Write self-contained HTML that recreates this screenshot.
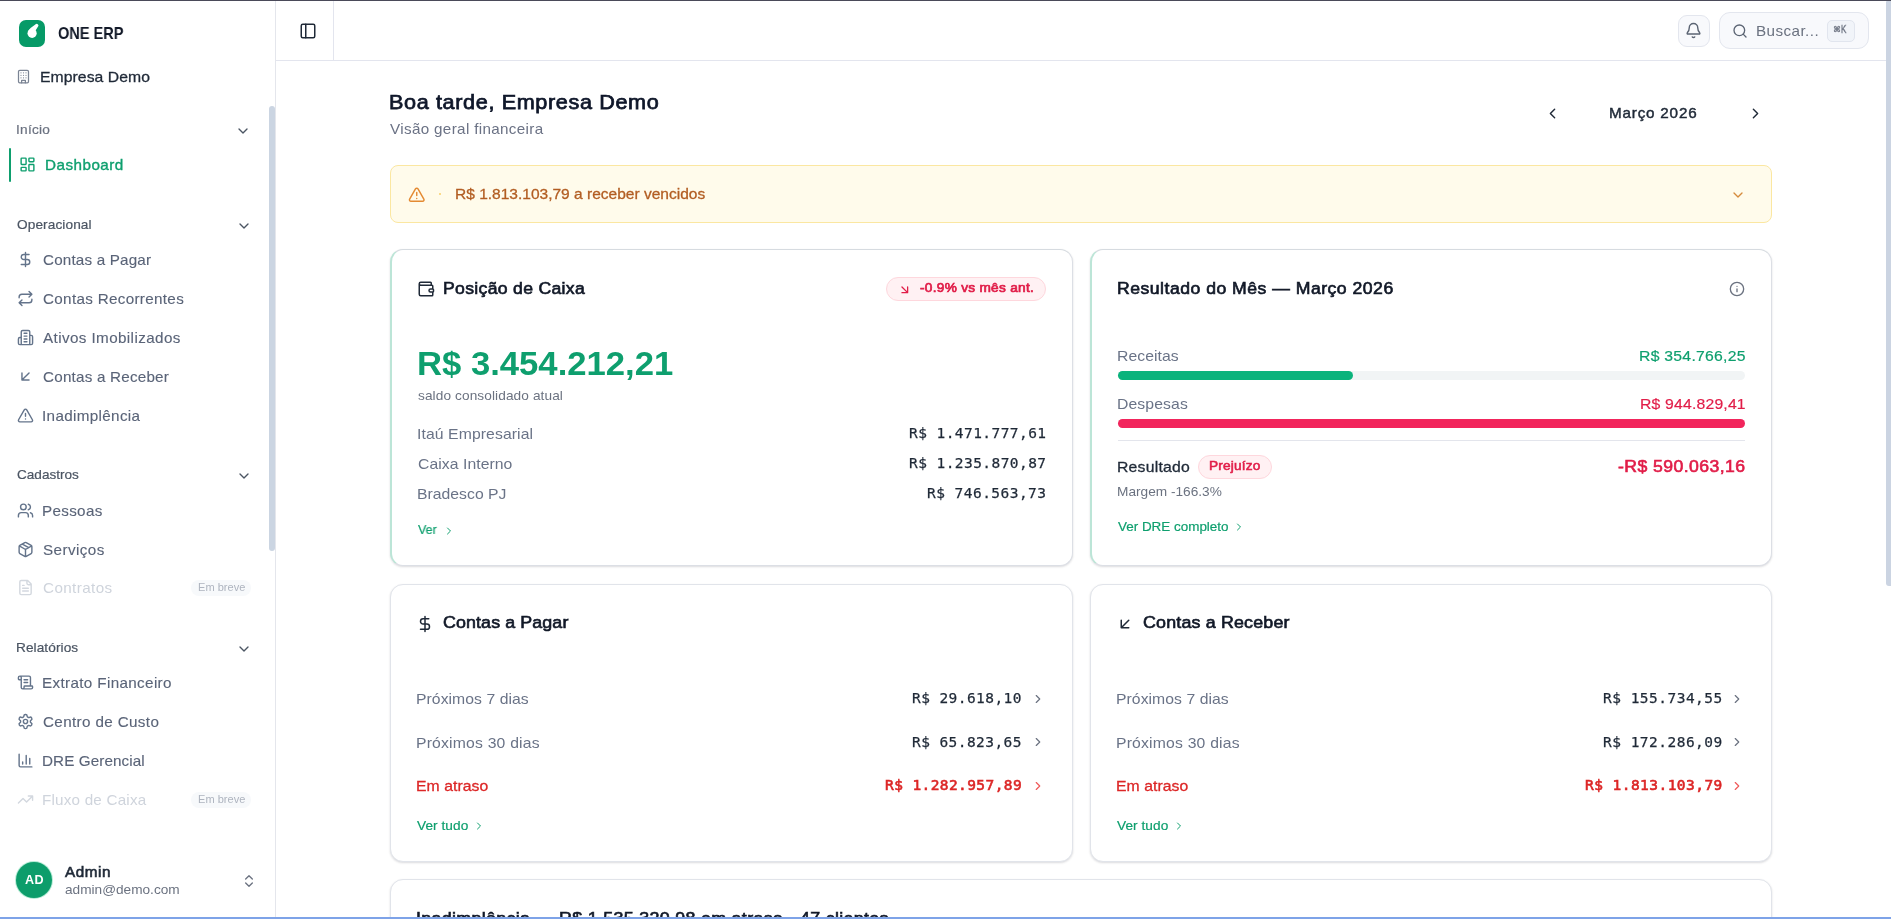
<!DOCTYPE html>
<html lang="pt-BR">
<head>
<meta charset="utf-8">
<title>ONE ERP — Dashboard</title>
<style>
*{box-sizing:border-box;margin:0;padding:0}
html,body{width:1891px;height:919px;overflow:hidden;background:#fff}
body{position:relative;font-family:"Liberation Sans",Arial,sans-serif;color:#111827;-webkit-font-smoothing:antialiased}
.abs,.t,svg.i{position:absolute}
.t{will-change:transform;white-space:pre;display:block;transform-origin:0 0}
svg.i{fill:none;stroke:currentColor;stroke-width:2;stroke-linecap:round;stroke-linejoin:round;overflow:visible}
.winline{position:absolute;left:0;top:0;width:1891px;height:1px;background:#4a4a59;z-index:9}
.winbottom{position:absolute;left:0;top:917px;width:1891px;height:2px;background:#7ea3e8;z-index:9}
.pagescroll{position:absolute;left:1886px;top:1px;width:6px;height:585px;background:#cbd4e2;border-radius:1px 0 0 3px;z-index:8}
/* sidebar */
aside{position:absolute;left:0;top:0;width:276px;height:919px;background:#fff;border-right:1px solid #e4e6ec}
.sidescroll{position:absolute;left:269px;top:105.5px;width:6px;height:445.5px;background:#cbd5e2;border-radius:3px}
.logo{position:absolute;left:18.5px;top:20px;width:26.5px;height:26.5px;border-radius:7px;background:#069a67}
.activebar{position:absolute;left:8.5px;top:148px;width:2px;height:34px;background:#0e9f6e;border-radius:1px}
.soon{position:absolute;left:191.4px;width:60px;height:16.4px;border-radius:9px;background:#f7f9fb}
.avatar{position:absolute;left:16.2px;top:862.2px;width:36px;height:36px;border-radius:50%;background:#0d9d6b;box-shadow:0 0 0 1px #b6ecd6}
/* topbar */
.topbar{position:absolute;left:276px;top:0;width:1610px;height:61px;background:#fff;border-bottom:1px solid #e3e5ee}
.vdiv{position:absolute;left:333px;top:1px;width:1px;height:59px;background:#e3e5ee}
.bellbtn{position:absolute;left:1678px;top:15px;width:32px;height:32px;border-radius:9px;border:1px solid #e3e6ee;background:#f8f9fc}
.search{position:absolute;left:1718.5px;top:12.3px;width:150.5px;height:36.5px;border-radius:11px;border:1px solid #e3e6ee;background:#f8f9fc}
.kbd{position:absolute;left:1827px;top:20.2px;width:27.5px;height:21.6px;border-radius:5px;border:1px solid #e1e5ee;background:#f1f4f9}
/* main */
.alert{position:absolute;left:389.8px;top:164.8px;width:1381.8px;height:57.8px;border-radius:8px;border:1px solid #fbe7a1;background:#fffbeb}
.card{position:absolute;background:#fff;border:1px solid #e1e4ea;border-radius:13px;box-shadow:0 1px 2px rgba(15,23,42,.10),0 1px 3px rgba(15,23,42,.05)}
.card.hl{border-left:2px solid #bce5d7;border-top-color:#d6dbe0;border-right-color:#dcdfe5;border-bottom-color:#dcdfe5}
.pill{position:absolute;border-radius:999px;border:1px solid #fed7dd;background:#fff1f3}
.track{position:absolute;height:8.5px;border-radius:5px;background:#f1f4f5}
.fill{position:absolute;left:0;top:0;height:100%;border-radius:5px}
.hr{position:absolute;height:1px;background:#e3e5ec}
</style>
</head>
<body>
<div class="winline"></div>

<aside>
  <div class="logo"><svg class="i" style="left:0;top:0" width="26.5" height="26.5" viewBox="0 0 26.5 26.5"><circle cx="13.1" cy="13.3" r="4.6" fill="#fff" stroke="none"/><path d="M16.7 4.3Q11.6 7.4 9 11.2L13.1 13.3 18 5.2Z" fill="#fff" stroke="none"/><path d="M13.8 12 17.9 5.5" stroke="#fff" stroke-width="3.1"/></svg></div>
  <!-- building -->
  <svg class="i" style="left:16.3px;top:69.1px;color:#7b8494" width="15" height="15" viewBox="0 0 24 24"><rect width="16" height="20" x="4" y="2" rx="2"/><path d="M9 22v-4h6v4M8 6h.01M16 6h.01M12 6h.01M12 10h.01M12 14h.01M16 10h.01M16 14h.01M8 10h.01M8 14h.01"/></svg>
  <!-- group chevrons -->
  <svg class="i" style="left:235px;top:122.9px;color:#4b5563" width="16" height="16" viewBox="0 0 24 24"><path d="m6 9 6 6 6-6"/></svg>
  <svg class="i" style="left:235.5px;top:217.8px;color:#4b5563" width="16" height="16" viewBox="0 0 24 24"><path d="m6 9 6 6 6-6"/></svg>
  <svg class="i" style="left:235.5px;top:467.7px;color:#4b5563" width="16" height="16" viewBox="0 0 24 24"><path d="m6 9 6 6 6-6"/></svg>
  <svg class="i" style="left:235.5px;top:640.5px;color:#4b5563" width="16" height="16" viewBox="0 0 24 24"><path d="m6 9 6 6 6-6"/></svg>
  <div class="activebar"></div>
  <!-- dashboard -->
  <svg class="i" style="left:18.7px;top:156.3px;color:#0e9f6e" width="17" height="17" viewBox="0 0 24 24"><rect width="7" height="9" x="3" y="3" rx="1"/><rect width="7" height="5" x="14" y="3" rx="1"/><rect width="7" height="9" x="14" y="12" rx="1"/><rect width="7" height="5" x="3" y="16" rx="1"/></svg>
  <!-- dollar -->
  <svg class="i" style="left:16.5px;top:251.1px;color:#64748b" width="17" height="17" viewBox="0 0 24 24"><path d="M12 2v20M17 5H9.5a3.5 3.5 0 0 0 0 7h5a3.5 3.5 0 0 1 0 7H6"/></svg>
  <!-- repeat -->
  <svg class="i" style="left:16.5px;top:290.2px;color:#64748b" width="17" height="17" viewBox="0 0 24 24"><path d="m17 2 4 4-4 4M3 11v-1a4 4 0 0 1 4-4h14M7 22l-4-4 4-4M21 13v1a4 4 0 0 1-4 4H3"/></svg>
  <!-- building-2 -->
  <svg class="i" style="left:16.5px;top:329.4px;color:#64748b" width="17" height="17" viewBox="0 0 24 24"><path d="M6 22V4a2 2 0 0 1 2-2h8a2 2 0 0 1 2 2v18ZM6 12H4a2 2 0 0 0-2 2v6a2 2 0 0 0 2 2h2M18 9h2a2 2 0 0 1 2 2v9a2 2 0 0 1-2 2h-2M10 6h4M10 10h4M10 14h4M10 18h4"/></svg>
  <!-- arrow-down-left -->
  <svg class="i" style="left:16.5px;top:368.4px;color:#64748b" width="17" height="17" viewBox="0 0 24 24"><path d="M17 7 7 17M17 17H7V7"/></svg>
  <!-- triangle-alert -->
  <svg class="i" style="left:16.5px;top:407.2px;color:#64748b" width="17" height="17" viewBox="0 0 24 24"><path d="m21.73 18-8-14a2 2 0 0 0-3.48 0l-8 14A2 2 0 0 0 4 21h16a2 2 0 0 0 1.73-3M12 9v4M12 17h.01"/></svg>
  <!-- users -->
  <svg class="i" style="left:16.5px;top:502.2px;color:#64748b" width="17" height="17" viewBox="0 0 24 24"><path d="M16 21v-2a4 4 0 0 0-4-4H6a4 4 0 0 0-4 4v2"/><circle cx="9" cy="7" r="4"/><path d="M22 21v-2a4 4 0 0 0-3-3.87M16 3.13a4 4 0 0 1 0 7.75"/></svg>
  <!-- box -->
  <svg class="i" style="left:16.5px;top:541.3px;color:#64748b" width="17" height="17" viewBox="0 0 24 24"><path d="m7.5 4.27 9 5.15M21 8a2 2 0 0 0-1-1.73l-7-4a2 2 0 0 0-2 0l-7 4A2 2 0 0 0 3 8v8a2 2 0 0 0 1 1.73l7 4a2 2 0 0 0 2 0l7-4A2 2 0 0 0 21 16ZM3.3 7l8.7 5 8.7-5M12 22V12"/></svg>
  <!-- file-text -->
  <svg class="i" style="left:16.5px;top:579.4px;color:#d3d8df" width="17" height="17" viewBox="0 0 24 24"><path d="M15 2H6a2 2 0 0 0-2 2v16a2 2 0 0 0 2 2h12a2 2 0 0 0 2-2V7ZM14 2v4a2 2 0 0 0 2 2h4M10 9H8M16 13H8M16 17H8"/></svg>
  <div class="soon" style="top:579.8px"></div>
  <!-- scroll-text -->
  <svg class="i" style="left:16.5px;top:674.4px;color:#64748b" width="17" height="17" viewBox="0 0 24 24"><path d="M15 12h-5M15 8h-5M19 17V5a2 2 0 0 0-2-2H4M8 21h12a2 2 0 0 0 2-2v-1a1 1 0 0 0-1-1H11a1 1 0 0 0-1 1v1a2 2 0 1 1-4 0V5a2 2 0 1 0-4 0v2a1 1 0 0 0 1 1h3"/></svg>
  <!-- settings -->
  <svg class="i" style="left:16.5px;top:713.4px;color:#64748b" width="17" height="17" viewBox="0 0 24 24"><path d="M12.22 2h-.44a2 2 0 0 0-2 2v.18a2 2 0 0 1-1 1.73l-.43.25a2 2 0 0 1-2 0l-.15-.08a2 2 0 0 0-2.73.73l-.22.38a2 2 0 0 0 .73 2.73l.15.1a2 2 0 0 1 1 1.72v.51a2 2 0 0 1-1 1.74l-.15.09a2 2 0 0 0-.73 2.73l.22.38a2 2 0 0 0 2.73.73l.15-.08a2 2 0 0 1 2 0l.43.25a2 2 0 0 1 1 1.73V20a2 2 0 0 0 2 2h.44a2 2 0 0 0 2-2v-.18a2 2 0 0 1 1-1.73l.43-.25a2 2 0 0 1 2 0l.15.08a2 2 0 0 0 2.73-.73l.22-.39a2 2 0 0 0-.73-2.73l-.15-.08a2 2 0 0 1-1-1.74v-.5a2 2 0 0 1 1-1.74l.15-.09a2 2 0 0 0 .73-2.73l-.22-.38a2 2 0 0 0-2.73-.73l-.15.08a2 2 0 0 1-2 0l-.43-.25a2 2 0 0 1-1-1.73V4a2 2 0 0 0-2-2z"/><circle cx="12" cy="12" r="3"/></svg>
  <!-- bar-chart -->
  <svg class="i" style="left:16.5px;top:752.2px;color:#64748b" width="17" height="17" viewBox="0 0 24 24"><path d="M3 3v16a2 2 0 0 0 2 2h16M18 17V9M13 17V5M8 17v-3"/></svg>
  <!-- trending-up -->
  <svg class="i" style="left:17.0px;top:791.1px;color:#d3d8df" width="17" height="17" viewBox="0 0 24 24"><path d="M22 7 13.5 15.5 8.5 10.5 2 17M16 7h6v6"/></svg>
  <div class="soon" style="top:791.8px"></div>
  <div class="avatar"></div>
  <!-- chevrons-up-down -->
  <svg class="i" style="left:241.4px;top:872.8px;color:#6b7280" width="16" height="16" viewBox="0 0 24 24"><path d="m7 15 5 5 5-5M7 9l5-5 5 5"/></svg>
  <div class="sidescroll"></div>
<span class="t x-side" style="left:58.40px;top:23.90px;font:700 16.2px/18px 'Liberation Sans', Arial, sans-serif;color:#111827;transform:scaleX(0.8992)">ONE ERP</span>
<span class="t x-side" style="left:39.95px;top:68.20px;font:400 15px/17px 'Liberation Sans', Arial, sans-serif;color:#1f2937;letter-spacing:0.052px;transform:scaleX(1.0500);-webkit-text-stroke:0.3px #1f2937">Empresa Demo</span>
<span class="t x-side" style="left:16.05px;top:122.10px;font:400 13px/15px 'Liberation Sans', Arial, sans-serif;color:#6b7280;letter-spacing:0.241px;transform:scaleX(1.0500);-webkit-text-stroke:0.2px #6b7280">Início</span>
<span class="t x-side" style="left:45.05px;top:156.80px;font:400 14.5px/16px 'Liberation Sans', Arial, sans-serif;color:#0e9f6e;letter-spacing:0.457px;transform:scaleX(1.0500);-webkit-text-stroke:0.35px #0e9f6e">Dashboard</span>
<span class="t x-side" style="left:17.20px;top:217.10px;font:400 13px/15px 'Liberation Sans', Arial, sans-serif;color:#4b5563;letter-spacing:0.093px;transform:scaleX(1.0500);-webkit-text-stroke:0.2px #4b5563">Operacional</span>
<span class="t x-side" style="left:43.40px;top:251.90px;font:400 14.5px/16px 'Liberation Sans', Arial, sans-serif;color:#5a6478;letter-spacing:0.163px;transform:scaleX(1.0500);-webkit-text-stroke:0.12px #5a6478">Contas a Pagar</span>
<span class="t x-side" style="left:43.40px;top:290.90px;font:400 14.5px/16px 'Liberation Sans', Arial, sans-serif;color:#5a6478;letter-spacing:0.301px;transform:scaleX(1.0500);-webkit-text-stroke:0.12px #5a6478">Contas Recorrentes</span>
<span class="t x-side" style="left:43.40px;top:330.20px;font:400 14.5px/16px 'Liberation Sans', Arial, sans-serif;color:#5a6478;letter-spacing:0.373px;transform:scaleX(1.0500);-webkit-text-stroke:0.12px #5a6478">Ativos Imobilizados</span>
<span class="t x-side" style="left:43.40px;top:369.20px;font:400 14.5px/16px 'Liberation Sans', Arial, sans-serif;color:#5a6478;letter-spacing:0.197px;transform:scaleX(1.0500);-webkit-text-stroke:0.12px #5a6478">Contas a Receber</span>
<span class="t x-side" style="left:42.35px;top:408.00px;font:400 14.5px/16px 'Liberation Sans', Arial, sans-serif;color:#5a6478;letter-spacing:0.327px;transform:scaleX(1.0500);-webkit-text-stroke:0.12px #5a6478">Inadimplência</span>
<span class="t x-side" style="left:17.20px;top:467.00px;font:400 13px/15px 'Liberation Sans', Arial, sans-serif;color:#4b5563;transform:scaleX(1.0444);-webkit-text-stroke:0.2px #4b5563">Cadastros</span>
<span class="t x-side" style="left:42.35px;top:503.00px;font:400 14.5px/16px 'Liberation Sans', Arial, sans-serif;color:#5a6478;letter-spacing:0.304px;transform:scaleX(1.0500);-webkit-text-stroke:0.12px #5a6478">Pessoas</span>
<span class="t x-side" style="left:43.40px;top:542.10px;font:400 14.5px/16px 'Liberation Sans', Arial, sans-serif;color:#5a6478;letter-spacing:0.406px;transform:scaleX(1.0500);-webkit-text-stroke:0.12px #5a6478">Serviços</span>
<span class="t x-side" style="left:43.40px;top:580.20px;font:400 14.5px/16px 'Liberation Sans', Arial, sans-serif;color:#cfd4dc;letter-spacing:0.376px;transform:scaleX(1.0500)">Contratos</span>
<span class="t x-side" style="left:197.80px;top:581.00px;font:400 10.5px/12px 'Liberation Sans', Arial, sans-serif;color:#aeb4bf;letter-spacing:0.034px;transform:scaleX(1.0500)">Em breve</span>
<span class="t x-side" style="left:16.15px;top:640.20px;font:400 13px/15px 'Liberation Sans', Arial, sans-serif;color:#4b5563;letter-spacing:0.071px;transform:scaleX(1.0500);-webkit-text-stroke:0.2px #4b5563">Relatórios</span>
<span class="t x-side" style="left:42.35px;top:675.20px;font:400 14.5px/16px 'Liberation Sans', Arial, sans-serif;color:#5a6478;letter-spacing:0.334px;transform:scaleX(1.0500);-webkit-text-stroke:0.12px #5a6478">Extrato Financeiro</span>
<span class="t x-side" style="left:43.40px;top:714.20px;font:400 14.5px/16px 'Liberation Sans', Arial, sans-serif;color:#5a6478;letter-spacing:0.340px;transform:scaleX(1.0500);-webkit-text-stroke:0.12px #5a6478">Centro de Custo</span>
<span class="t x-side" style="left:42.35px;top:753.00px;font:400 14.5px/16px 'Liberation Sans', Arial, sans-serif;color:#5a6478;letter-spacing:0.091px;transform:scaleX(1.0500);-webkit-text-stroke:0.12px #5a6478">DRE Gerencial</span>
<span class="t x-side" style="left:42.35px;top:791.80px;font:400 14.5px/16px 'Liberation Sans', Arial, sans-serif;color:#cfd4dc;letter-spacing:0.192px;transform:scaleX(1.0500)">Fluxo de Caixa</span>
<span class="t x-side" style="left:197.80px;top:793.00px;font:400 10.5px/12px 'Liberation Sans', Arial, sans-serif;color:#aeb4bf;letter-spacing:0.034px;transform:scaleX(1.0500)">Em breve</span>
<span class="t x-side" style="left:25.00px;top:873.00px;font:700 12px/14px 'Liberation Sans', Arial, sans-serif;color:#ffffff;letter-spacing:0.334px;transform:scaleX(1.0500)">AD</span>
<span class="t x-side" style="left:64.70px;top:863.80px;font:400 14.5px/16px 'Liberation Sans', Arial, sans-serif;color:#1f2937;letter-spacing:0.551px;transform:scaleX(1.0500);-webkit-text-stroke:0.6px #1f2937">Admin</span>
<span class="t x-side" style="left:64.70px;top:882.20px;font:400 13px/15px 'Liberation Sans', Arial, sans-serif;color:#6b7280;transform:scaleX(1.0492)">admin@demo.com</span>
</aside>

<header>
  <div class="topbar"></div>
  <!-- panel-left -->
  <svg class="i" style="left:299.4px;top:22px;color:#1f2937" width="18" height="18" viewBox="0 0 24 24"><rect width="18" height="18" x="3" y="3" rx="2"/><path d="M9 3v18"/></svg>
  <div class="vdiv"></div>
  <div class="bellbtn"></div>
  <svg class="i" style="left:1685px;top:21.9px;color:#5b6473" width="17" height="17" viewBox="0 0 24 24"><path d="M10.268 21a2 2 0 0 0 3.464 0M3.262 15.326A1 1 0 0 0 4 17h16a1 1 0 0 0 .74-1.673C19.41 13.956 18 12.499 18 8A6 6 0 0 0 6 8c0 4.499-1.411 5.956-2.738 7.326"/></svg>
  <div class="search"></div>
  <svg class="i" style="left:1732.3px;top:22.6px;color:#5b6473" width="16" height="16" viewBox="0 0 24 24"><circle cx="11" cy="11" r="8"/><path d="m21 21-4.3-4.3"/></svg>
  <div class="kbd"></div>
<span class="t x-top" style="left:1755.75px;top:23.00px;font:400 14.5px/16px 'Liberation Sans', Arial, sans-serif;color:#6b7280;letter-spacing:0.404px;transform:scaleX(1.0500)">Buscar...</span>
<span class="t x-top" style="left:1832.90px;top:25.30px;font:400 8px/9px 'DejaVu Sans', 'Liberation Sans', sans-serif;color:#6b7280;-webkit-text-stroke:0.3px #6b7280">⌘</span>
<span class="t x-top" style="left:1841.10px;top:24.00px;font:400 10.3px/11px 'Liberation Sans', Arial, sans-serif;color:#6b7280;transform:scaleX(0.7714);-webkit-text-stroke:0.4px #6b7280">K</span>
</header>

<main>
  <div class="pagehead">
<span class="t x-head" style="left:389.25px;top:90.00px;font:400 20.6px/23px 'Liberation Sans', Arial, sans-serif;color:#0f172a;letter-spacing:0.594px;transform:scaleX(1.0500);-webkit-text-stroke:0.75px #0f172a">Boa tarde, Empresa Demo</span>
<span class="t x-head" style="left:390.30px;top:121.00px;font:400 14.5px/16px 'Liberation Sans', Arial, sans-serif;color:#6b7285;letter-spacing:0.321px;transform:scaleX(1.0500)">Visão geral financeira</span>
<span class="t x-head" style="left:1609.15px;top:105.00px;font:400 14.5px/16px 'Liberation Sans', Arial, sans-serif;color:#1f2937;letter-spacing:0.764px;transform:scaleX(1.0500);-webkit-text-stroke:0.45px #1f2937">Março 2026</span>
    <svg class="i" style="left:1543.8px;top:105.2px;color:#1f2937" width="17" height="17" viewBox="0 0 24 24"><path d="m15 18-6-6 6-6"/></svg>
    <svg class="i" style="left:1747px;top:105.2px;color:#1f2937" width="17" height="17" viewBox="0 0 24 24"><path d="m9 18 6-6-6-6"/></svg>
  </div>

  <section aria-label="Alertas">
    <div class="alert"></div>
    <svg class="i" style="left:407.6px;top:185.9px;color:#e48a32" width="17.5" height="17.5" viewBox="0 0 24 24"><path d="m21.73 18-8-14a2 2 0 0 0-3.48 0l-8 14A2 2 0 0 0 4 21h16a2 2 0 0 0 1.73-3M12 9v4M12 17h.01"/></svg>
    <div class="abs" style="left:439.2px;top:193px;width:2px;height:2px;border-radius:50%;background:#f8cf6a"></div>
    <svg class="i" style="left:1730.3px;top:186.9px;color:#d58a3c" width="16" height="16" viewBox="0 0 24 24"><path d="m6 9 6 6 6-6"/></svg>
<span class="t x-alert" style="left:454.77px;top:185.20px;font:400 15px/17px 'Liberation Sans', Arial, sans-serif;color:#b25d22;transform:scaleX(1.0344);-webkit-text-stroke:0.3px #b25d22">R$ 1.813.103,79 a receber vencidos</span>
  </section>

  <!-- card 1: Posição de Caixa -->
  <section>
    <div class="card hl" style="left:389.5px;top:249.3px;width:683.3px;height:316.7px"></div>
    <svg class="i" style="left:417.2px;top:279.9px;color:#1f2937" width="18" height="18" viewBox="0 0 24 24"><path d="M19 7V4a1 1 0 0 0-1-1H5a2 2 0 0 0 0 4h15a1 1 0 0 1 1 1v4h-3a2 2 0 0 0 0 4h3a1 1 0 0 0 1-1v-2a1 1 0 0 0-1-1M3 5v14a2 2 0 0 0 2 2h15a1 1 0 0 0 1-1v-4"/></svg>
    <div class="pill" style="left:885.5px;top:277px;width:160.5px;height:24.2px"></div>
    <svg class="i" style="left:897.6px;top:282.7px;color:#e11d48;stroke-width:2.3" width="13.6" height="13.6" viewBox="0 0 24 24"><path d="m7 7 10 10M17 7v10H7"/></svg>
    <svg class="i" style="left:443.2px;top:524.6px;color:#0e9f6e" width="12" height="12" viewBox="0 0 24 24"><path d="m9 18 6-6-6-6"/></svg>
<span class="t x-c1" style="left:443.15px;top:279.30px;font:400 16.8px/19px 'Liberation Sans', Arial, sans-serif;color:#111827;letter-spacing:0.294px;transform:scaleX(1.0500);-webkit-text-stroke:0.65px #111827">Posição de Caixa</span>
<span class="t x-c1" style="left:919.70px;top:280.00px;font:400 13px/15px 'Liberation Sans', Arial, sans-serif;color:#e11d48;letter-spacing:0.268px;transform:scaleX(1.0500);-webkit-text-stroke:0.7px #e11d48">-0.9% vs mês ant.</span>
<span class="t x-c1" style="left:417.12px;top:345.20px;font:700 33.3px/37px 'Liberation Sans', Arial, sans-serif;color:#0e9f6e;transform:scaleX(1.0406)">R$ 3.454.212,21</span>
<span class="t x-c1" style="left:418.20px;top:388.00px;font:400 13px/15px 'Liberation Sans', Arial, sans-serif;color:#6b7280;letter-spacing:0.096px;transform:scaleX(1.0500)">saldo consolidado atual</span>
<span class="t x-c1" style="left:416.95px;top:425.10px;font:400 15px/17px 'Liberation Sans', Arial, sans-serif;color:#6a7387;letter-spacing:0.084px;transform:scaleX(1.0500)">Itaú Empresarial</span>
<span class="t x-c1" style="left:418.00px;top:455.10px;font:400 15px/17px 'Liberation Sans', Arial, sans-serif;color:#6a7387;letter-spacing:0.054px;transform:scaleX(1.0500)">Caixa Interno</span>
<span class="t x-c1" style="left:416.95px;top:485.00px;font:400 15px/17px 'Liberation Sans', Arial, sans-serif;color:#6a7387;letter-spacing:0.017px;transform:scaleX(1.0500)">Bradesco PJ</span>
<span class="t x-c1" style="left:908.70px;top:425.40px;font:400 14.5px/16px 'DejaVu Sans Mono', 'Liberation Mono', monospace;color:#1f2937;letter-spacing:0.435px;-webkit-text-stroke:0.25px #1f2937">R$ 1.471.777,61</span>
<span class="t x-c1" style="left:908.70px;top:455.40px;font:400 14.5px/16px 'DejaVu Sans Mono', 'Liberation Mono', monospace;color:#1f2937;letter-spacing:0.435px;-webkit-text-stroke:0.25px #1f2937">R$ 1.235.870,87</span>
<span class="t x-c1" style="left:926.70px;top:485.40px;font:400 14.5px/16px 'DejaVu Sans Mono', 'Liberation Mono', monospace;color:#1f2937;letter-spacing:0.462px;-webkit-text-stroke:0.25px #1f2937">R$ 746.563,73</span>
<span class="t x-c1" style="left:418.00px;top:521.90px;font:400 13px/15px 'Liberation Sans', Arial, sans-serif;color:#0e9f6e;transform:scaleX(0.9562);-webkit-text-stroke:0.2px #0e9f6e">Ver</span>
  </section>

  <!-- card 2: Resultado do Mês -->
  <section>
    <div class="card hl" style="left:1089.5px;top:249.3px;width:682.5px;height:316.7px"></div>
    <svg class="i" style="left:1729px;top:281px;color:#6b7280" width="16" height="16" viewBox="0 0 24 24"><circle cx="12" cy="12" r="10"/><path d="M12 16v-4M12 8h.01"/></svg>
    <div class="track" style="left:1118px;top:371.3px;width:627.2px"><div class="fill" style="width:234.7px;background:#0bb37c"></div></div>
    <div class="track" style="left:1118px;top:419px;width:627.2px"><div class="fill" style="width:627.2px;background:#f2255c"></div></div>
    <div class="hr" style="left:1118px;top:440.2px;width:627.2px"></div>
    <div class="pill" style="left:1197.8px;top:455px;width:74.2px;height:24px"></div>
    <svg class="i" style="left:1233.3px;top:521.2px;color:#0e9f6e" width="12" height="12" viewBox="0 0 24 24"><path d="m9 18 6-6-6-6"/></svg>
<span class="t x-c2" style="left:1116.95px;top:279.40px;font:400 16.8px/19px 'Liberation Sans', Arial, sans-serif;color:#111827;letter-spacing:0.467px;transform:scaleX(1.0500);-webkit-text-stroke:0.65px #111827">Resultado do Mês — Março 2026</span>
<span class="t x-c2" style="left:1116.95px;top:347.40px;font:400 15px/17px 'Liberation Sans', Arial, sans-serif;color:#6a7387;letter-spacing:0.040px;transform:scaleX(1.0500)">Receitas</span>
<span class="t x-c2" style="left:1638.75px;top:347.20px;font:400 15px/17px 'Liberation Sans', Arial, sans-serif;color:#0e9f6e;letter-spacing:0.252px;transform:scaleX(1.0500);-webkit-text-stroke:0.2px #0e9f6e">R$ 354.766,25</span>
<span class="t x-c2" style="left:1116.95px;top:395.40px;font:400 15px/17px 'Liberation Sans', Arial, sans-serif;color:#6a7387;letter-spacing:0.100px;transform:scaleX(1.0500)">Despesas</span>
<span class="t x-c2" style="left:1639.75px;top:395.40px;font:400 15px/17px 'Liberation Sans', Arial, sans-serif;color:#e11d48;letter-spacing:0.180px;transform:scaleX(1.0500);-webkit-text-stroke:0.2px #e11d48">R$ 944.829,41</span>
<span class="t x-c2" style="left:1116.65px;top:458.10px;font:400 15px/17px 'Liberation Sans', Arial, sans-serif;color:#1f2937;letter-spacing:0.213px;transform:scaleX(1.0500);-webkit-text-stroke:0.3px #1f2937">Resultado</span>
<span class="t x-c2" style="left:1208.85px;top:458.20px;font:400 13px/15px 'Liberation Sans', Arial, sans-serif;color:#e11d48;letter-spacing:0.179px;transform:scaleX(1.0500);-webkit-text-stroke:0.55px #e11d48">Prejuízo</span>
<span class="t x-c2" style="left:1116.69px;top:484.30px;font:400 13.5px/15px 'Liberation Sans', Arial, sans-serif;color:#6b7280;transform:scaleX(1.0123)">Margem -166.3%</span>
<span class="t x-c2" style="left:1618.10px;top:456.90px;font:400 16.8px/19px 'Liberation Sans', Arial, sans-serif;color:#e11d48;letter-spacing:0.416px;transform:scaleX(1.0500);-webkit-text-stroke:0.65px #e11d48">-R$ 590.063,16</span>
<span class="t x-c2" style="left:1117.70px;top:519.20px;font:400 13px/15px 'Liberation Sans', Arial, sans-serif;color:#0e9f6e;transform:scaleX(1.0337);-webkit-text-stroke:0.2px #0e9f6e">Ver DRE completo</span>
  </section>

  <!-- card 3: Contas a Pagar -->
  <section>
    <div class="card" style="left:389.5px;top:584.3px;width:683.3px;height:277.3px"></div>
    <svg class="i" style="left:416.2px;top:615.2px;color:#1f2937" width="18" height="18" viewBox="0 0 24 24"><path d="M12 2v20M17 5H9.5a3.5 3.5 0 0 0 0 7h5a3.5 3.5 0 0 1 0 7H6"/></svg>
    <svg class="i" style="left:1030.9px;top:691.7px;color:#6b7280" width="14" height="14" viewBox="0 0 24 24"><path d="m9 18 6-6-6-6"/></svg>
    <svg class="i" style="left:1030.9px;top:735.2px;color:#6b7280" width="14" height="14" viewBox="0 0 24 24"><path d="m9 18 6-6-6-6"/></svg>
    <svg class="i" style="left:1030.9px;top:778.6px;color:#ef5a5a" width="14" height="14" viewBox="0 0 24 24"><path d="m9 18 6-6-6-6"/></svg>
    <svg class="i" style="left:473.2px;top:820.3px;color:#0e9f6e" width="12" height="12" viewBox="0 0 24 24"><path d="m9 18 6-6-6-6"/></svg>
<span class="t x-c3" style="left:442.80px;top:613.20px;font:400 17px/19px 'Liberation Sans', Arial, sans-serif;color:#111827;letter-spacing:0.096px;transform:scaleX(1.0500);-webkit-text-stroke:0.65px #111827">Contas a Pagar</span>
<span class="t x-c3" style="left:416.05px;top:690.00px;font:400 15px/17px 'Liberation Sans', Arial, sans-serif;color:#6a7387;letter-spacing:0.043px;transform:scaleX(1.0500)">Próximos 7 dias</span>
<span class="t x-c3" style="left:416.05px;top:733.50px;font:400 15px/17px 'Liberation Sans', Arial, sans-serif;color:#6a7387;letter-spacing:0.176px;transform:scaleX(1.0500)">Próximos 30 dias</span>
<span class="t x-c3" style="left:415.95px;top:777.10px;font:400 15px/17px 'Liberation Sans', Arial, sans-serif;color:#dc2626;letter-spacing:0.064px;transform:scaleX(1.0500);-webkit-text-stroke:0.3px #dc2626">Em atraso</span>
<span class="t x-c3" style="left:912.30px;top:690.30px;font:400 14.5px/16px 'DejaVu Sans Mono', 'Liberation Mono', monospace;color:#1f2937;letter-spacing:0.425px;-webkit-text-stroke:0.25px #1f2937">R$ 29.618,10</span>
<span class="t x-c3" style="left:912.30px;top:733.80px;font:400 14.5px/16px 'DejaVu Sans Mono', 'Liberation Mono', monospace;color:#1f2937;letter-spacing:0.425px;-webkit-text-stroke:0.25px #1f2937">R$ 65.823,65</span>
<span class="t x-c3" style="left:885.10px;top:777.30px;font:400 14.5px/16px 'DejaVu Sans Mono', 'Liberation Mono', monospace;color:#dc2626;letter-spacing:0.406px;-webkit-text-stroke:0.6px #dc2626">R$ 1.282.957,89</span>
<span class="t x-c3" style="left:417.00px;top:818.00px;font:400 13px/15px 'Liberation Sans', Arial, sans-serif;color:#0e9f6e;letter-spacing:0.054px;transform:scaleX(1.0500);-webkit-text-stroke:0.2px #0e9f6e">Ver tudo</span>
  </section>

  <!-- card 4: Contas a Receber -->
  <section>
    <div class="card" style="left:1089.5px;top:584.3px;width:682.5px;height:277.3px"></div>
    <svg class="i" style="left:1115.9px;top:614.5px;color:#1f2937" width="18" height="18" viewBox="0 0 24 24"><path d="M17 7 7 17M17 17H7V7"/></svg>
    <svg class="i" style="left:1730px;top:691.7px;color:#6b7280" width="14" height="14" viewBox="0 0 24 24"><path d="m9 18 6-6-6-6"/></svg>
    <svg class="i" style="left:1730px;top:735.2px;color:#6b7280" width="14" height="14" viewBox="0 0 24 24"><path d="m9 18 6-6-6-6"/></svg>
    <svg class="i" style="left:1730px;top:778.6px;color:#ef5a5a" width="14" height="14" viewBox="0 0 24 24"><path d="m9 18 6-6-6-6"/></svg>
    <svg class="i" style="left:1172.5px;top:820.3px;color:#0e9f6e" width="12" height="12" viewBox="0 0 24 24"><path d="m9 18 6-6-6-6"/></svg>
<span class="t x-c4" style="left:1142.90px;top:613.20px;font:400 17px/19px 'Liberation Sans', Arial, sans-serif;color:#111827;letter-spacing:0.163px;transform:scaleX(1.0500);-webkit-text-stroke:0.65px #111827">Contas a Receber</span>
<span class="t x-c4" style="left:1115.75px;top:690.00px;font:400 15px/17px 'Liberation Sans', Arial, sans-serif;color:#6a7387;letter-spacing:0.043px;transform:scaleX(1.0500)">Próximos 7 dias</span>
<span class="t x-c4" style="left:1115.75px;top:733.50px;font:400 15px/17px 'Liberation Sans', Arial, sans-serif;color:#6a7387;letter-spacing:0.176px;transform:scaleX(1.0500)">Próximos 30 dias</span>
<span class="t x-c4" style="left:1115.65px;top:777.10px;font:400 15px/17px 'Liberation Sans', Arial, sans-serif;color:#dc2626;letter-spacing:0.064px;transform:scaleX(1.0500);-webkit-text-stroke:0.3px #dc2626">Em atraso</span>
<span class="t x-c4" style="left:1602.70px;top:690.30px;font:400 14.5px/16px 'DejaVu Sans Mono', 'Liberation Mono', monospace;color:#1f2937;letter-spacing:0.479px;-webkit-text-stroke:0.25px #1f2937">R$ 155.734,55</span>
<span class="t x-c4" style="left:1602.70px;top:733.80px;font:400 14.5px/16px 'DejaVu Sans Mono', 'Liberation Mono', monospace;color:#1f2937;letter-spacing:0.479px;-webkit-text-stroke:0.25px #1f2937">R$ 172.286,09</span>
<span class="t x-c4" style="left:1584.60px;top:777.30px;font:400 14.5px/16px 'DejaVu Sans Mono', 'Liberation Mono', monospace;color:#dc2626;letter-spacing:0.456px;-webkit-text-stroke:0.6px #dc2626">R$ 1.813.103,79</span>
<span class="t x-c4" style="left:1116.70px;top:818.00px;font:400 13px/15px 'Liberation Sans', Arial, sans-serif;color:#0e9f6e;letter-spacing:0.054px;transform:scaleX(1.0500);-webkit-text-stroke:0.2px #0e9f6e">Ver tudo</span>
  </section>

  <!-- card 5: Inadimplência -->
  <section>
    <div class="card" style="left:389.5px;top:879.3px;width:1382.5px;height:120px"></div>
<span class="t x-c5" style="left:416.15px;top:908.70px;font:400 17px/19px 'Liberation Sans', Arial, sans-serif;color:#111827;letter-spacing:0.299px;transform:scaleX(1.0500);-webkit-text-stroke:0.65px #111827">Inadimplência — R$ 1.535.320,98 em atraso · 47 clientes</span>
  </section>
</main>

<div class="pagescroll"></div>
<div class="winbottom"></div>
</body>
</html>
